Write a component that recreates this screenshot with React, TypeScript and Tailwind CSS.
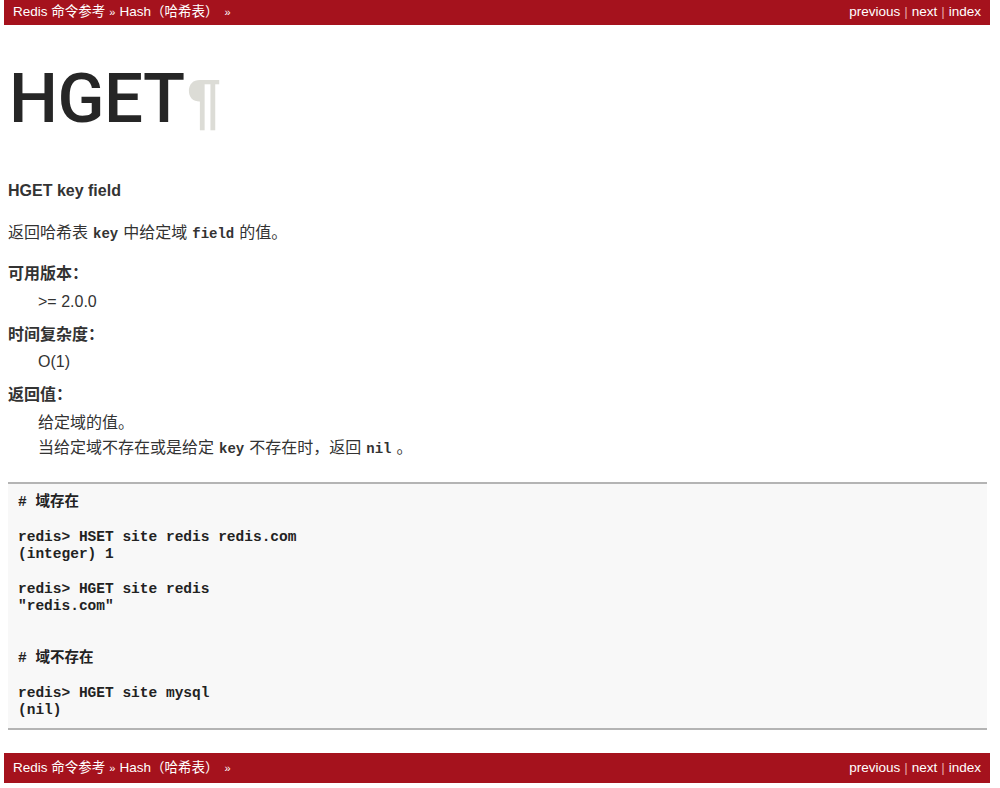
import React from 'react';

const sans = { fontFamily: '"Liberation Sans", "Noto Sans CJK SC", sans-serif' };

const NavBar = ({ bottom = false }: { bottom?: boolean }) => (
  <div
    className={`flex items-center justify-between bg-[#a5121d] text-white text-[13.5px] ml-[4px] w-[986px] px-[9px] ${
      bottom ? 'h-[30px]' : 'h-[25px]'
    }`}
  >
    <div className="flex items-center">
      <span>Redis 命令参考</span>
      <span className="mx-[4px] text-[11px]">»</span>
      <span>Hash（哈希表）</span>
      <span className="ml-[6px] text-[11px]">»</span>
    </div>
    <div className="flex items-center">
      <span>previous</span>
      <span className="mx-[4px] text-[#e8a0a5]">|</span>
      <span>next</span>
      <span className="mx-[4px] text-[#e8a0a5]">|</span>
      <span>index</span>
    </div>
  </div>
);

const Code = ({ children }: { children: React.ReactNode }) => (
  <code className="font-['Liberation_Mono',monospace] font-bold text-[14px] text-[#333] mx-[5px]">{children}</code>
);

const codeLines = [
  '# 域存在',
  '',
  'redis> HSET site redis redis.com',
  '(integer) 1',
  '',
  'redis> HGET site redis',
  '"redis.com"',
  '',
  '',
  '# 域不存在',
  '',
  'redis> HGET site mysql',
  '(nil)',
];

export default function App() {
  return (
    <div className="bg-white h-[788px] overflow-hidden text-[#333]" style={sans}>
      <NavBar />
      <div className="pl-[8px] w-[987px]">
        <h1 className="font-['Roboto',sans-serif] text-[69px] leading-none font-medium tracking-[-0.5px] text-[#262626] mt-[39px] mb-0 pl-[1px]">
          HGET
          <span className="font-['Liberation_Sans',sans-serif] font-bold text-[62px] text-[#dcdcd6] ml-[2px]">¶</span>
        </h1>

        <p className="font-bold text-[16px] leading-[24px] mt-[46px]">HGET key field</p>

        <p className="text-[16px] leading-[24px] mt-[18px]">
          返回哈希表<Code>key</Code>中给定域<Code>field</Code>的值。
        </p>

        <div className="text-[16px] leading-[24px]">
          <div className="font-bold mt-[16px]">可用版本：</div>
          <div className="pl-[30px] mt-[4px]">&gt;= 2.0.0</div>

          <div className="font-bold mt-[9px]">时间复杂度：</div>
          <div className="pl-[30px] mt-[3px]">O(1)</div>

          <div className="font-bold mt-[9px]">返回值：</div>
          <div className="pl-[30px] leading-[25px] mt-[3px]">
            <div>给定域的值。</div>
            <div>
              当给定域不存在或是给定<Code>key</Code>不存在时，返回<Code>nil</Code>。
            </div>
          </div>
        </div>

        <pre className="mt-[20px] bg-[#f8f8f8] border-t-[2px] border-b-[2px] border-[#b4b4b4] pt-[10px] pb-[9px] px-[10px] font-['Liberation_Mono','Noto_Sans_CJK_SC',monospace] font-bold text-[14.5px] leading-[17.35px] text-[#222] w-[979px]">
          {codeLines.map((l, i) => (
            <div key={i} className="h-[17.35px]">{l}</div>
          ))}
        </pre>
      </div>
      <div className="h-[23px]" />
      <NavBar bottom />
    </div>
  );
}
